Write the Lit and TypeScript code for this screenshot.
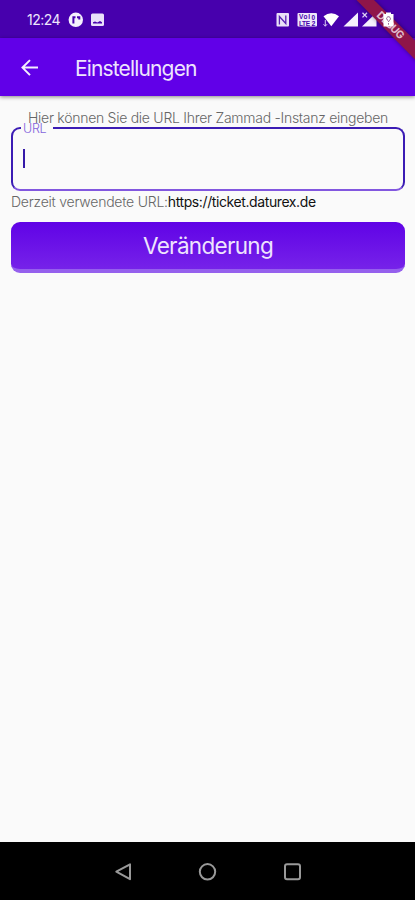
import { LitElement, html, css, svg } from "lit";
import { customElement } from "lit/decorators.js";

@customElement("status-bar")
class StatusBar extends LitElement {
  static styles = css`
    :host { display: flex; height: 38px; background: #4700ad; color: #eee6fc; }
    .time { width: 33px; margin: 11px 0 0 27px; font-size: 14px; line-height: 18px; letter-spacing: -0.5px; white-space: nowrap; }
    .left { width: 46px; height: 38px; margin-left: 4px; }
    .right { width: 140px; height: 38px; margin-left: auto; }
    svg { display: block; }
    text { font-family: "Liberation Sans", Arial, sans-serif; font-weight: 700; }
  `;
  render() {
    return html`
      <span class="time">12:24</span>
      <svg class="left" viewBox="64 0 46 38">
        <circle cx="75.8" cy="19.8" r="7.2" fill="#f5f0fd" />
        <path d="M73.4 23.5V17.3H75.5M77 17.3H79.3V19.5" fill="none" stroke="#4700ad" stroke-width="2" />
        <rect x="91" y="13.5" width="13" height="12.5" rx="1.5" fill="#e9e0fa" />
        <path d="M93 23.5V22.3L95 21.5L97.3 22.5L100 21L102 22.3V23.5Z" fill="#4700ad" />
      </svg>
      <svg class="right" viewBox="275 0 140 38">
        <rect x="276.5" y="13" width="12.5" height="13.5" rx="1" fill="#e9e0f8" />
        <path d="M279.4 24.5V16.5L285.8 23.5V15.5" fill="none" stroke="#5a20b4" stroke-width="1.3" />
        <rect x="297.5" y="13" width="19.5" height="13.5" rx="1" fill="#eee7fa" />
        <text x="299" y="19" font-size="6.5" fill="#4700ad" textLength="11">VoI</text>
        <text x="299" y="25.5" font-size="6.5" fill="#4700ad" textLength="11">LTE</text>
        <text x="311.5" y="19.5" font-size="6.5" fill="#4700ad">0</text>
        <text x="311.5" y="25.8" font-size="7" fill="#4700ad">2</text>
        <path d="M323.5 16.2Q331.3 10.2 339 16.2L331.3 26.3Z" fill="#fff" />
        <path d="M325.3 20V26.2M323.5 24.2L325.3 26.2L327.1 24.2" fill="none" stroke="#d8c8f2" stroke-width="1" />
        <path d="M343.5 26.5L358 12.5V26.5Z" fill="#f5f0fd" />
        <path d="M362 26.5L376.5 12.5V26.5Z" fill="#f5f0fd" />
        <path d="M362.5 12.8L367 17.4M367 12.8L362.5 17.4" stroke="#e0d4f5" stroke-width="1.3" />
      </svg>
    `;
  }
}

@customElement("debug-banner")
class DebugBanner extends LitElement {
  static styles = css`
    :host { position: absolute; top: 0; right: 0; width: 70px; height: 70px; overflow: hidden; }
    svg { display: block; }
    .ribbon { filter: drop-shadow(0 0 2px #0006); }
    text { font-family: "Inter", "Liberation Sans", sans-serif; font-weight: 700; }
  `;
  render() {
    return html`<svg width="70" height="70" viewBox="345 0 70 70">
      <path class="ribbon" d="M355.5 -1H373L418 43.5V62.5Z" fill="#8f1549" />
      <text transform="translate(390.8 25) rotate(45)" y="4" text-anchor="middle" font-size="10.5" fill="#e0bccd" textLength="34">DEBUG</text>
      <path d="M383.5 14H386V12.5H391V14H393.5V26.5H383.5Z" fill="#fff" />
      <path d="M386.6 18.6A1.9 1.9 0 1 1 389.6 20.2Q388.5 21 388.5 22M388.5 23.2V24.6M386.6 18.6Q386.8 20 388 20.4" fill="none" stroke="#8a4f88" stroke-width="1" />
    </svg>`;
  }
}

@customElement("app-header")
class AppHeader extends LitElement {
  static styles = css`
    :host { display: flex; align-items: center; height: 58px; background: #6100e8; color: #eee5fd; box-shadow: 0 1px 4px #0007; z-index: 1; }
    .back { width: 20px; height: 20px; margin-left: 20px; }
    .title { margin: 4px 0 0 35px; font-size: 21px; font-weight: 400; line-height: 28px; letter-spacing: -0.85px; }
  `;
  render() {
    return html`
      <svg class="back" viewBox="0 0 20 20">
        <path d="M18 10.6H2.8M10 3.1L2.5 10.6L10 18.1" fill="none" stroke="#f4effe" stroke-width="2" />
      </svg>
      <span class="title">Einstellungen</span>
    `;
  }
}

@customElement("settings-form")
class SettingsForm extends LitElement {
  static styles = css`
    :host { display: flex; flex-direction: column; flex: 1; padding: 13px 10px 0 11px; background: #fafafa; font-weight: 300; }
    .hint { height: 18px; padding-left: 17px; font-size: 14px; line-height: 18px; letter-spacing: -0.27px; color: #666; white-space: nowrap; }
    .field { position: relative; box-sizing: border-box; height: 64px; border: 2px solid #3b1cb4; border-bottom-color: #8257df; border-radius: 9px; }
    .label { position: absolute; left: 6px; top: -9px; width: 32px; height: 18px; font-size: 12.5px; line-height: 18px; letter-spacing: -0.3px; padding-left: 4px; color: #8465dc; box-sizing: border-box; }
    .gap { position: absolute; left: 8px; top: -2px; width: 32px; height: 2px; background: #fafafa; }
    .cursor { width: 2px; height: 19px; margin: 20px 0 0 10px; background: #3519a8; }
    .current { height: 18px; margin-top: 2px; font-size: 14px; line-height: 18px; letter-spacing: -0.23px; color: #666; white-space: nowrap; }
    .url { color: #111; font-weight: 400; letter-spacing: -0.4px; }
    .submit { box-sizing: border-box; height: 51px; margin-top: 11px; padding: 0; border: 0; border-bottom: 4px solid #9560ed; border-radius: 9px; background: linear-gradient(#6003e6, #7622e9); color: #eee4fd; font: 400 22.5px/47px "Inter", sans-serif; letter-spacing: -0.7px; }
  `;
  render() {
    return html`
      <div class="hint">Hier können Sie die URL Ihrer Zammad -Instanz eingeben</div>
      <div class="field"><i class="gap"></i><span class="label">URL</span><div class="cursor"></div></div>
      <div class="current">Derzeit verwendete URL:<span class="url">https://ticket.daturex.de</span></div>
      <button class="submit">Veränderung</button>
    `;
  }
}

@customElement("nav-bar")
class NavBar extends LitElement {
  static styles = css`
    :host { display: flex; align-items: center; justify-content: center; gap: 64px; height: 58px; background: #000; }
    svg { display: block; width: 21px; height: 21px; fill: none; stroke: #999; stroke-width: 2; stroke-linejoin: round; }
  `;
  render() {
    const shapes = [
      svg`<path d="M18 3.3V18.2L4.3 10.7Z" />`,
      svg`<circle cx="10.5" cy="10.8" r="7.7" />`,
      svg`<rect x="3" y="3.3" width="15" height="15" rx="2" />`,
    ];
    return shapes.map((s) => html`<svg viewBox="0 0 21 21">${s}</svg>`);
  }
}

@customElement("app-root")
class AppRoot extends LitElement {
  static styles = css`
    :host { display: flex; flex-direction: column; position: relative; width: 415px; height: 900px; overflow: hidden; font-family: "Inter", "Liberation Sans", sans-serif; }
    .banner { z-index: 2; }
  `;
  render() {
    return html`
      <status-bar></status-bar>
      <app-header></app-header>
      <settings-form></settings-form>
      <nav-bar></nav-bar>
      <debug-banner class="banner"></debug-banner>
    `;
  }
}
